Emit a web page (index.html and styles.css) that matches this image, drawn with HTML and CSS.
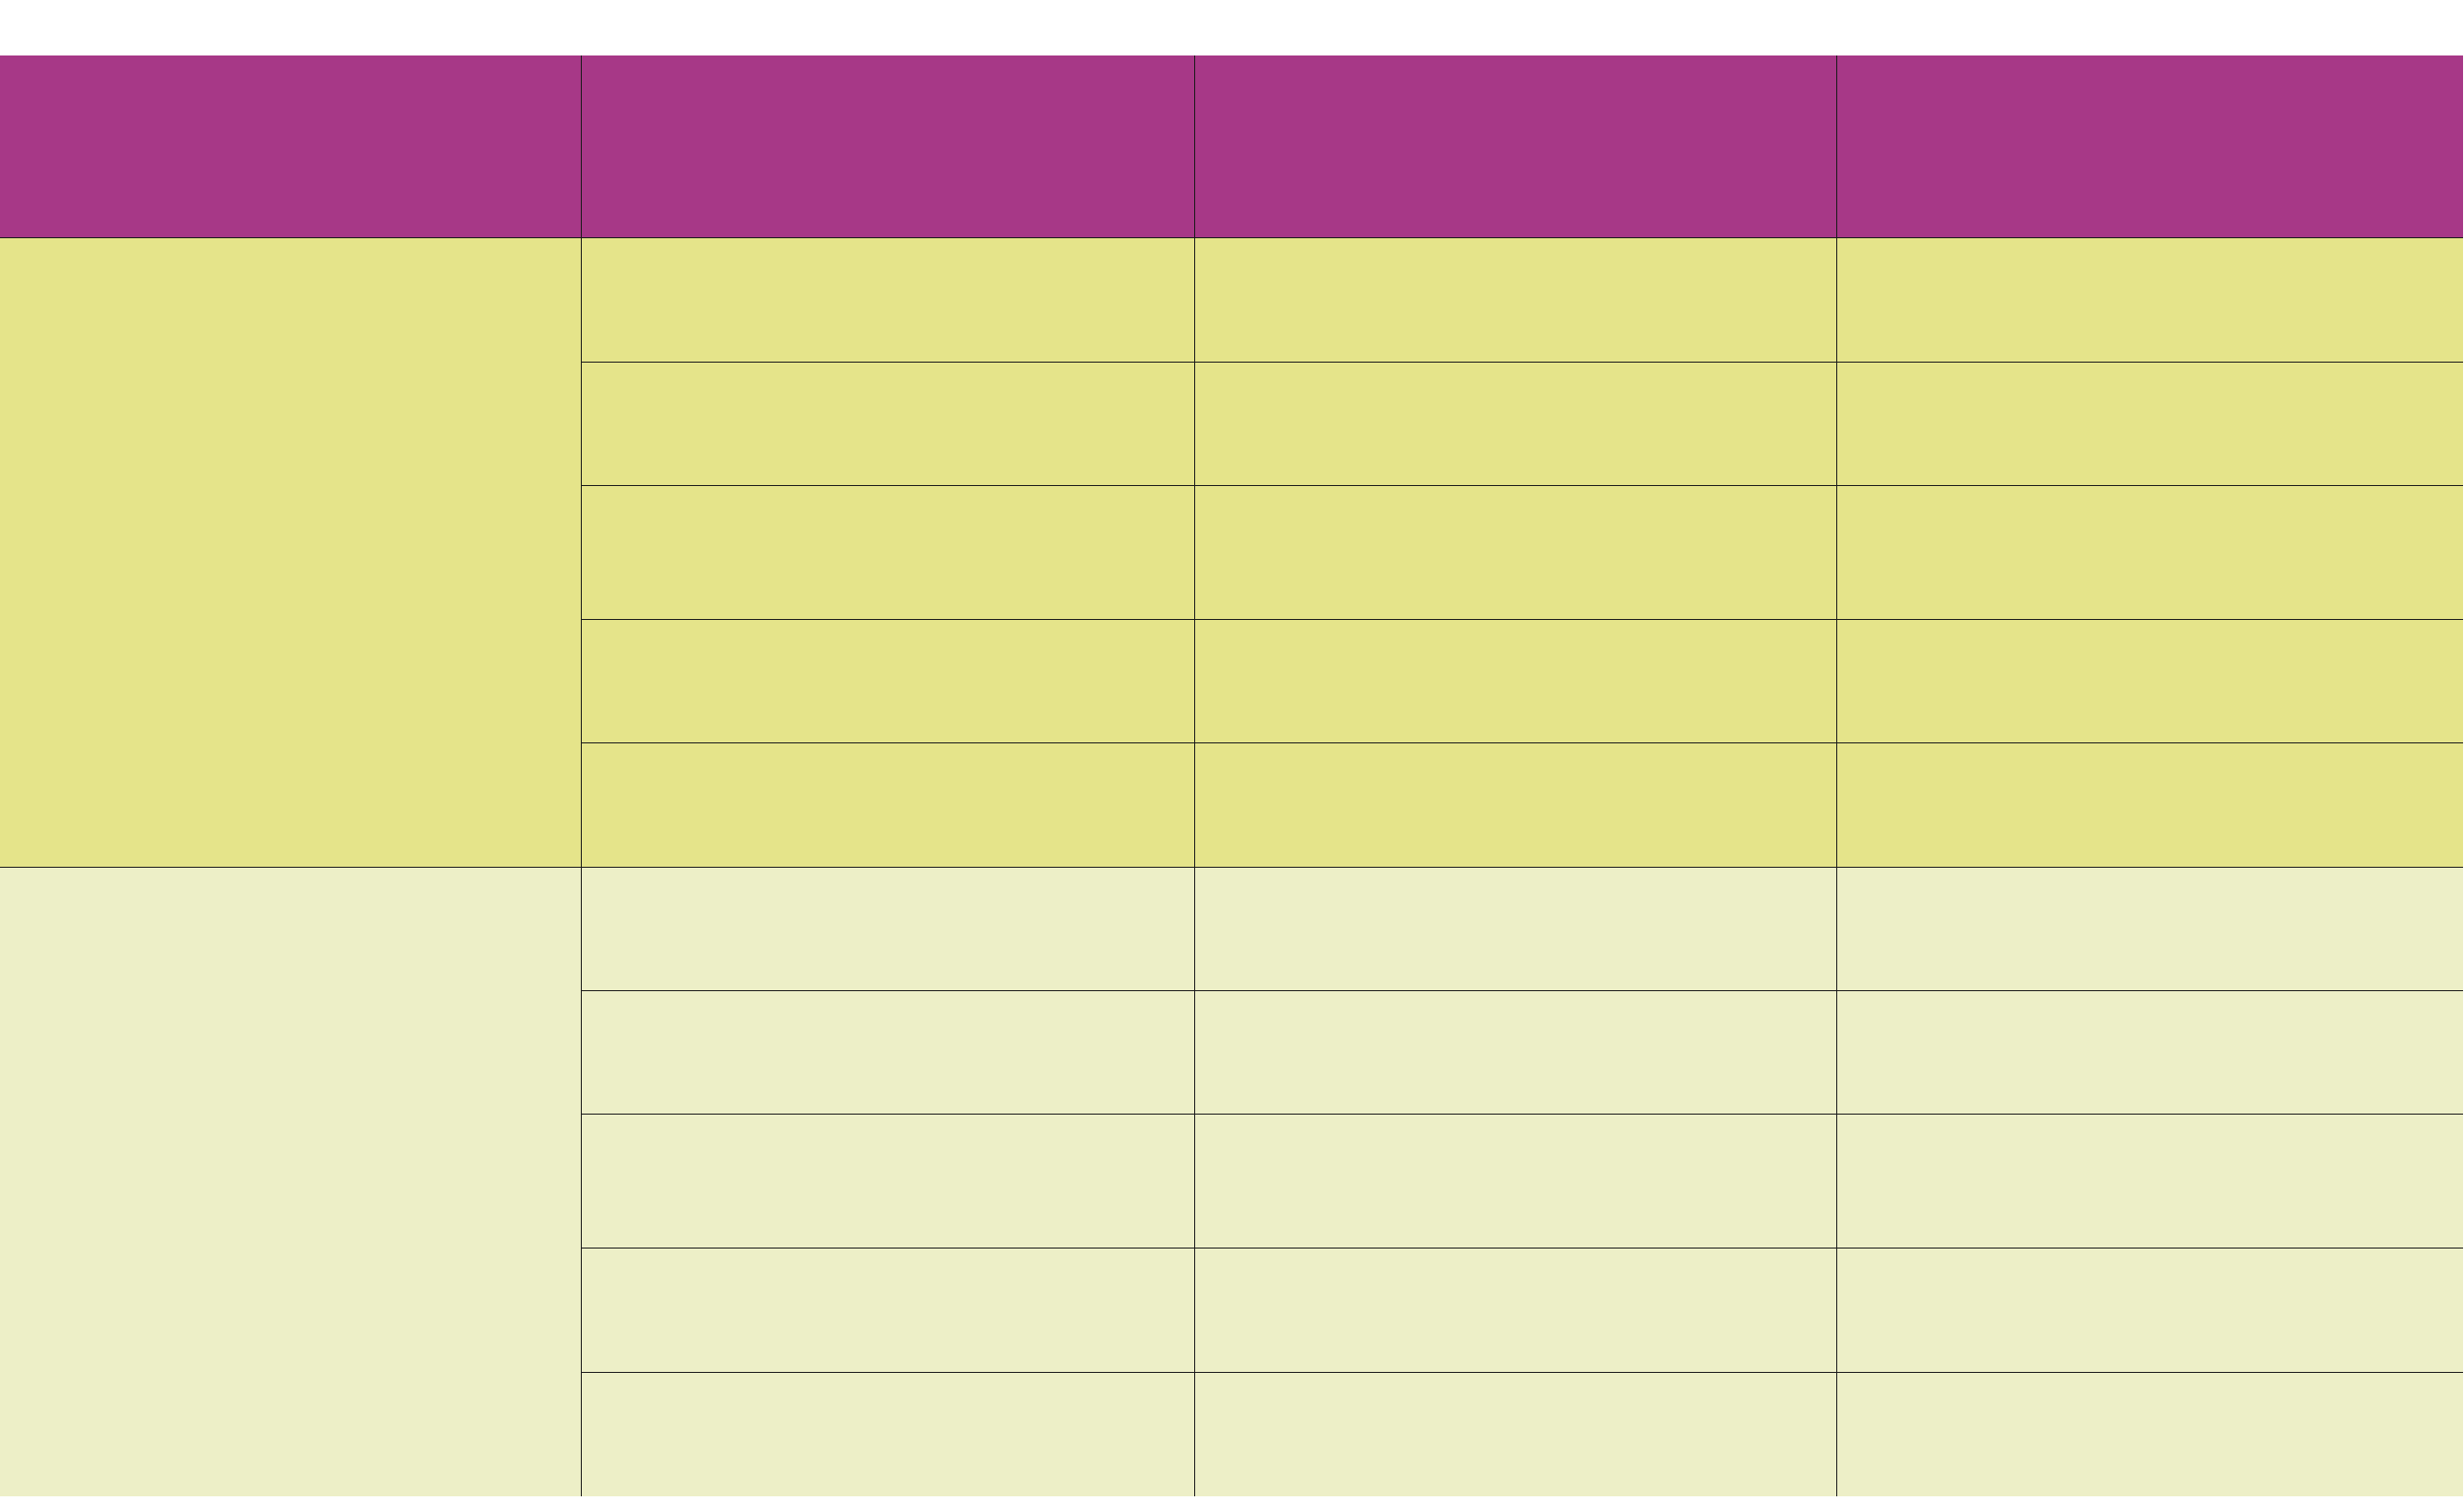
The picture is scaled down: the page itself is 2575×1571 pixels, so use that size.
FILE: index.html
```html
<!DOCTYPE html>
<html>
<head>
<meta charset="utf-8">
<link rel="stylesheet" href="styles.css">
</head>
<body>
<div class="table">
  <div class="cell head"></div>
  <div class="cell head"></div>
  <div class="cell head"></div>
  <div class="cell head"></div>

  <div class="cell g1 span"></div>
  <div class="cell g1"></div><div class="cell g1"></div><div class="cell g1"></div>
  <div class="cell g1"></div><div class="cell g1"></div><div class="cell g1"></div>
  <div class="cell g1"></div><div class="cell g1"></div><div class="cell g1"></div>
  <div class="cell g1"></div><div class="cell g1"></div><div class="cell g1"></div>
  <div class="cell g1"></div><div class="cell g1"></div><div class="cell g1"></div>

  <div class="cell g2 span"></div>
  <div class="cell g2"></div><div class="cell g2"></div><div class="cell g2"></div>
  <div class="cell g2"></div><div class="cell g2"></div><div class="cell g2"></div>
  <div class="cell g2"></div><div class="cell g2"></div><div class="cell g2"></div>
  <div class="cell g2"></div><div class="cell g2"></div><div class="cell g2"></div>
  <div class="cell g2"></div><div class="cell g2"></div><div class="cell g2"></div>
</div>
</body>
</html>
```

FILE: styles.css
```css
html, body {
  margin: 0;
  padding: 0;
  background: #ffffff;
  font-family: "Liberation Sans", Arial, sans-serif;
}

body {
  padding-top: 58px;
}

.table {
  display: grid;
  width: 2574px;
  grid-template-columns: 607px 640px 670px 654px;
  grid-template-rows: 190px 129px 128px 139px 128px 129px 128px 128px 139px 129px 129px;
  gap: 1px;
  background: #1a1a1a;
}

.cell.head {
  background: #a73887;
}

.cell.g1 {
  background: #e5e48a;
}

.cell.g2 {
  background: #edefc7;
}

.cell.span {
  grid-row: span 5;
}
```
